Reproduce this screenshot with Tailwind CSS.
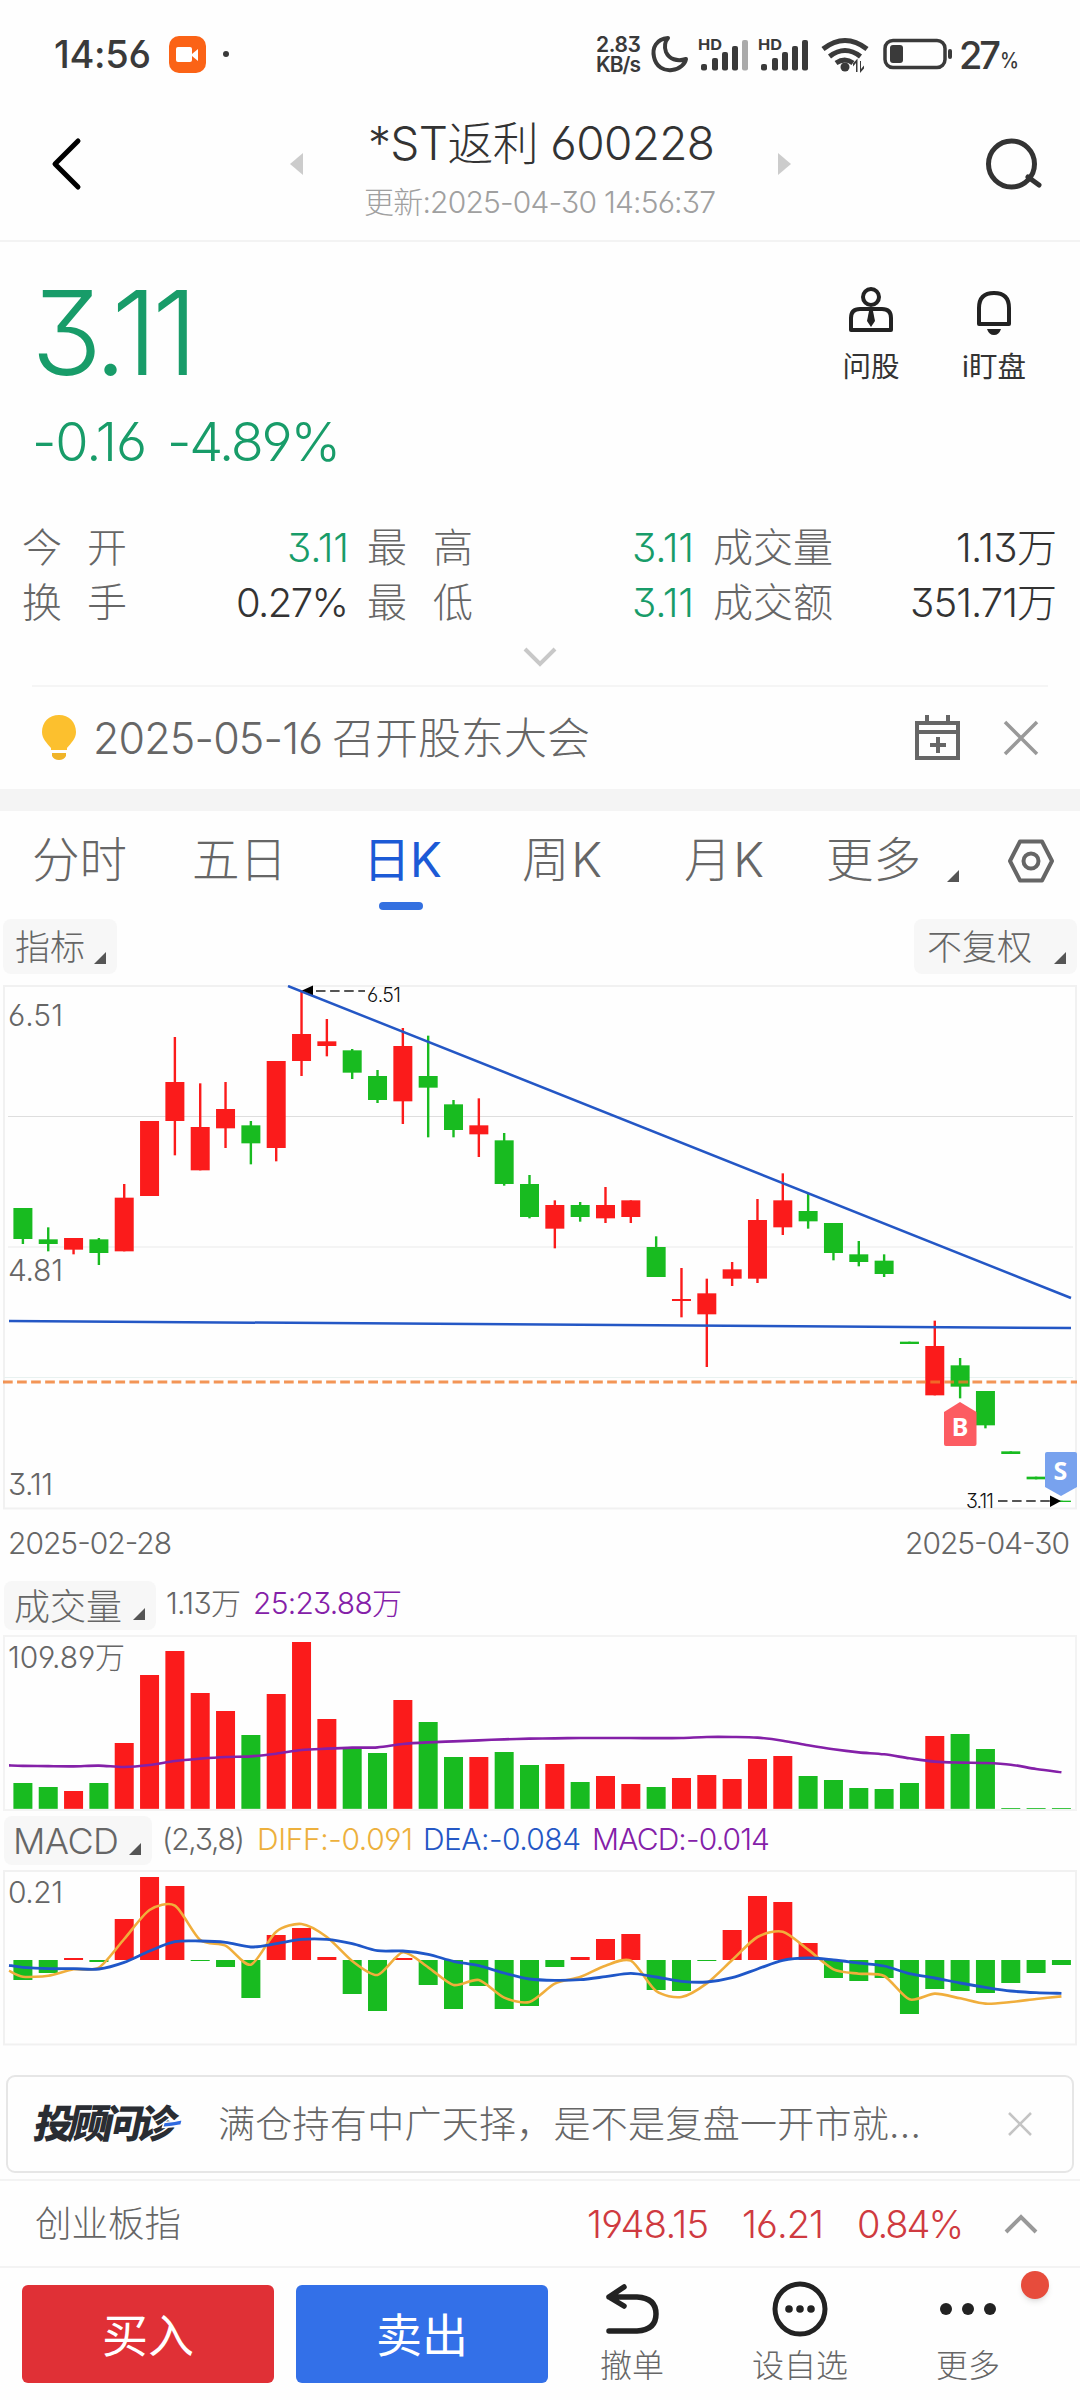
<!DOCTYPE html>
<html lang="zh-CN">
<head>
<meta charset="utf-8">
<title>*ST返利 600228</title>
<script src="https://cdn.jsdelivr.net/npm/@tailwindcss/browser@4"></script>
</head>
<body class="w-[1080px] h-[2400px] overflow-hidden bg-[#fefefe] font-[Inter,'Noto_Sans_CJK_SC',sans-serif] [font-feature-settings:'cv03','cv04','cv09'] font-light text-[#666] whitespace-nowrap">

<!-- status bar -->
<div class="h-[108px] flex items-center text-[#3a3a3a]">
  <span class="ml-[54px] w-[115px] text-[38px] font-medium" data-fit="97">14:56</span>
  <svg class="w-[37px] h-[37px]" viewBox="0 0 37 37"><rect width="37" height="37" rx="10" fill="#fb6316"/><rect x="7" y="11" width="16" height="15" rx="2" fill="#fff"/><path d="M23 18l6-5v12l-6-5z" fill="#fff"/></svg>
  <span class="ml-[17px] w-[6px] h-[6px] rounded-full bg-[#3a3a3a]"></span>
  <div class="ml-[367px] w-[53px] text-[21px] leading-[20px] font-semibold pt-[1px]"><div data-fit="45">2.83</div><div data-fit="45">KB/s</div></div>
  <svg class="w-[371px] h-[40px]" viewBox="649 34 371 40">
    <path d="M668 38C656 39 652 48 654 57C656 67 664 71 672 70C680 69 685 64 686 59C677 62 669 59 666 52C664 47 665 41 668 38Z" fill="none" stroke="#3a3a3a" stroke-width="4" stroke-linejoin="round"/>
    <g fill="#3a3a3a">
      <rect x="701" y="64" width="6" height="6.500" rx="2"/><rect x="712" y="58" width="6" height="12.500" rx="2"/><rect x="722" y="52" width="6" height="18.500" rx="2"/><rect x="732" y="46" width="6" height="24.500" rx="2"/><rect x="742" y="40" width="6" height="30.500" rx="2" fill="#aaa"/>
      <rect x="761" y="64" width="6" height="6.500" rx="2"/><rect x="772" y="58" width="6" height="12.500" rx="2"/><rect x="782" y="52" width="6" height="18.500" rx="2"/><rect x="792" y="46" width="6" height="24.500" rx="2"/><rect x="802" y="40" width="6" height="30.500" rx="2"/>
      <text x="698" y="50" font-size="15" font-weight="700" textLength="24" lengthAdjust="spacingAndGlyphs">HD</text>
      <text x="758" y="50" font-size="15" font-weight="700" textLength="24" lengthAdjust="spacingAndGlyphs">HD</text>
      <circle cx="845" cy="67" r="4.500"/>
      <rect x="890" y="45" width="13" height="18" rx="3"/><rect x="948" y="49" width="4" height="10" rx="2"/>
      <path d="M856 72V63l-3 3.500v-3l4.500-5V72zM861 61v8l3-3.500v3L860 73V61z"/>
    </g>
    <g fill="none" stroke="#3a3a3a" stroke-width="5"><path d="M823 49q22-17 44 0M829.500 56.500q15.500-12 31 0M836 63q9-6 17 0"/></g>
    <rect x="885" y="40.500" width="60" height="27" rx="8" fill="none" stroke="#3a3a3a" stroke-width="3.500"/>
    <text x="959" y="68.500" font-size="38" font-weight="500" fill="#3a3a3a" textLength="42">27</text>
    <text x="1000" y="68" font-size="21" font-weight="500" fill="#3a3a3a" textLength="19" lengthAdjust="spacingAndGlyphs">%</text>
  </svg>
</div>

<!-- title bar -->
<div class="h-[134px] flex items-start border-b-2 border-[#f3f3f3]">
  <svg class="ml-[49px] mt-[28px] w-[36px] h-[56px]" viewBox="0 0 36 56"><path d="M29 5L6 28L29 51" fill="none" stroke="#000" stroke-width="5" stroke-linecap="round" stroke-linejoin="round"/></svg>
  <svg class="ml-[205px] mt-[45px] w-[13px] h-[22px]" viewBox="0 0 13 22"><path d="M13 0v22L0 11z" fill="#ccc"/></svg>
  <div class="ml-[65px] w-[410px] flex flex-col">
    <span class="h-[60px] leading-[60px] mt-[5px] text-[46px] text-[#333]" data-fit="347">*ST返利 600228</span>
    <span class="h-[40px] leading-[40px] mt-[9px] -ml-[4px] text-[30px] text-[#a0a0a0]" data-fit="352">更新:2025-04-30 14:56:37</span>
  </div>
  <svg class="mt-[45px] w-[13px] h-[22px]" viewBox="0 0 13 22"><path d="M0 0v22L13 11z" fill="#ccc"/></svg>
  <svg class="ml-[193px] mt-[28px] w-[60px] h-[56px]" viewBox="984 136 60 56"><circle cx="1011.500" cy="164" r="23" fill="none" stroke="#333" stroke-width="5"/><path d="M1028 177l11 8" stroke="#333" stroke-width="5" stroke-linecap="round"/></svg>
</div>

<!-- price -->
<div class="h-[270px] flex items-start">
  <div class="w-[841px] text-[#189c69]">
    <div class="ml-[31px] mt-[31px] h-[120px] leading-[120px] text-[117px]" data-fit="167">3.11</div>
    <div class="h-[60px] mt-[19px] leading-[60px] text-[54px] flex">
      <span class="ml-[32px] w-[135px]" data-fit="115">-0.16</span><span data-fit="174">-4.89%</span>
    </div>
  </div>
  <div class="w-[60px] mt-[43px] flex flex-col items-center text-[28.500px] text-[#333] font-normal">
    <svg class="w-[50px] h-[50px]" viewBox="846 285 50 50" fill="none" stroke="#222" stroke-width="4"><circle cx="871" cy="297" r="8"/><path d="M851 330V318q0-9 9-9h22q9 0 9 9v12z" stroke-linejoin="round"/><path d="M869 311h4l2 10l-4 6l-4-6z" fill="#222" stroke="none"/></svg>
    <span class="h-[44px] leading-[44px] mt-[10px]">问股</span>
  </div>
  <div class="ml-[58px] w-[70px] mt-[43px] flex flex-col items-center text-[28.500px] text-[#333] font-normal">
    <svg class="w-[50px] h-[50px]" viewBox="970 285 50 50" fill="none" stroke="#222" stroke-width="4"><path d="M980 324V308q0-15 15-15t15 15V324z" stroke-linejoin="round"/><path d="M988 329h14q-2 6-7 6t-7-6z" fill="#222" stroke="none"/></svg>
    <span class="h-[44px] leading-[44px] mt-[10px]">i盯盘</span>
  </div>
</div>

<!-- quote figures -->
<div class="h-[173px] pt-[9px]">
  <div class="grid grid-cols-[65px_65px_197px_66px_66px_213px_123px_240px] ml-[22px] text-[40px] leading-[54px] h-[54px]">
    <span>今</span><span>开</span><span class="text-right text-[#189c69]"><b class="font-[270]" data-fit="62">3.11</b></span>
    <span class="pl-[18px]">最</span><span class="pl-[18px]">高</span><span class="text-right text-[#189c69]"><b class="font-[270]" data-fit="62">3.11</b></span>
    <span class="pl-[19px]">成交量</span><span class="text-right text-[#333]"><b class="font-[270]" data-fit="101">1.13万</b></span>
  </div>
  <div class="grid grid-cols-[65px_65px_197px_66px_66px_213px_123px_240px] ml-[22px] text-[40px] leading-[56px] h-[56px]">
    <span>换</span><span>手</span><span class="text-right text-[#333]"><b class="font-[270]" data-fit="113">0.27%</b></span>
    <span class="pl-[18px]">最</span><span class="pl-[18px]">低</span><span class="text-right text-[#189c69]"><b class="font-[270]" data-fit="62">3.11</b></span>
    <span class="pl-[19px]">成交额</span><span class="text-right text-[#333]"><b class="font-[270]" data-fit="147">351.71万</b></span>
  </div>
  <svg class="mx-auto mt-[15px] w-[36px] h-[22px]" viewBox="0 0 36 22"><path d="M3 3L18 18L33 3" fill="none" stroke="#c8c8c8" stroke-width="4"/></svg>
</div>

<!-- notice -->
<div class="h-[104px] mx-[32px] border-t-2 border-[#f5f5f5] flex items-center">
  <svg class="ml-[10px] w-[34px] h-[46px]" viewBox="0 0 34 46"><path d="M17 0C7 0 0 7 0 17C0 24 5 28 9 33V35H25V33C29 28 34 24 34 17C34 7 27 0 17 0Z" fill="#fcc02e"/><path d="M10 38H24V41Q22 45 17 45T10 41Z" fill="#f0b429"/></svg>
  <span class="ml-[17px] w-[821px] text-[43px]"><b class="font-light" data-fit="230">2025-05-16</b><b class="font-light ml-[9px]">召开股东大会</b></span>
  <svg class="-ml-[2px] w-[50px] h-[48px]" viewBox="911 713 50 48" fill="none" stroke="#666" stroke-width="4"><path d="M916 722h41v35h-41zM916 731h41M926 714v10M947 714v10"/><path d="M929 744h16M937 736v16" stroke-width="4"/></svg>
  <svg class="ml-[39px] w-[40px] h-[40px]" viewBox="0 0 40 40"><path d="M4 4L36 36M36 4L4 36" stroke="#999" stroke-width="3.500"/></svg>
</div>
<div class="h-[22px] bg-[#f4f4f4]"></div>

<!-- period tabs -->
<div class="h-[108px] flex pt-[14px] text-[47.500px] leading-[70px]">
  <span class="ml-[32px] w-[160px]">分时</span><span class="w-[173px]">五日</span>
  <div class="w-[157px] text-[#1c5ad6] font-normal"><div class="-ml-[2px] h-[77px]" data-fit="79">日K</div><div class="ml-[14px] w-[44px] h-[8px] rounded-full bg-[#3370e0]"></div></div>
  <span class="w-[162px]" data-fit="80">周K</span><span class="w-[142px]" data-fit="80">月K</span><span class="w-[121px]">更多</span>
  <svg class="mt-[45px] w-[12px] h-[12px]" viewBox="0 0 12 12"><path d="M12 0V12H0z" fill="#555"/></svg>
  <svg class="ml-[46px] mt-[12px] w-[52px] h-[48px]" viewBox="0 0 52 48" fill="none" stroke="#666" stroke-width="4"><path d="M5 24L15 4.500H37L47 24L37 43.500H15z" stroke-linejoin="round"/><circle cx="26" cy="24" r="7.500"/></svg>
</div>

<div class="h-[66px] flex justify-between items-start px-[3px] text-[35px]">
  <div class="w-[114px] h-[55px] rounded-[8px] bg-[#f7f7f7] flex items-center pt-[1px] pl-[12px]">指标<svg class="ml-[9px] mt-[21px] w-[12px] h-[12px]" viewBox="0 0 12 12"><path d="M12 0V12H0z" fill="#555"/></svg></div>
  <div class="w-[163px] h-[55px] rounded-[8px] bg-[#f7f7f7] flex items-center pt-[1px] pl-[13px]">不复权<svg class="ml-[22px] mt-[21px] w-[12px] h-[12px]" viewBox="0 0 12 12"><path d="M12 0V12H0z" fill="#555"/></svg></div>
</div>

<!-- candles -->
<svg class="block w-[1080px] h-[596px]" viewBox="0 985 1080 596">
  <rect x="4" y="986" width="1072" height="522.500" fill="none" stroke="#f1f1f1" stroke-width="2"/>
  <path d="M8 1116.500H1073" stroke="#dedede" stroke-width="1"/><path d="M8 1247H1073" stroke="#f0f0f0" stroke-width="1.500"/><path d="M4 1377.500H1073" stroke="#e8f1f0" stroke-width="1"/>
  <g id="candles"></g>
  <path d="M288 986L1071 1298M9 1321L1071 1328" stroke="#2457c5" stroke-width="2.500" fill="none"/>
  <path d="M3 1382H1077" stroke="#f07a2c" stroke-opacity=".8" stroke-width="3" stroke-dasharray="9.700 4.350"/>
  <path d="M302 990.500L313 985.500V995z"/><path d="M316 991H365" stroke="#555" stroke-width="1.800" stroke-dasharray="9.500 4.600"/>
  <path d="M1061 1501L1050 1495.500V1507z"/><path d="M998 1501H1050" stroke="#555" stroke-width="1.800" stroke-dasharray="9.500 4.600"/>
  <path d="M960 1402L976.500 1412V1444Q976.500 1446 974.500 1446H946Q944 1446 944 1444V1412z" fill="#fc5c62"/>
  <path d="M1061 1496L1077 1487V1454Q1077 1452 1075 1452H1047Q1045 1452 1045 1454V1487z" fill="#78a2ee"/>
  <g font-family="'Noto Sans',sans-serif" font-weight="700" fill="#fff" font-size="25" text-anchor="middle"><text x="960" y="1436">B</text><text x="1060.500" y="1480">S</text></g>
  <g fill="#111" font-size="19.500" font-weight="300"><text x="367" y="1002" textLength="34">6.51</text><text x="966" y="1508" textLength="28">3.11</text></g>
  <g fill="#666" font-size="30">
    <text x="8" y="1026" textLength="55">6.51</text><text x="8" y="1281" textLength="55">4.81</text><text x="8" y="1494.500" textLength="45">3.11</text>
    <text x="8" y="1554" textLength="164">2025-02-28</text><text x="905" y="1554" textLength="165">2025-04-30</text>
  </g>
</svg>

<!-- volume -->
<div class="h-[54px] flex items-start text-[30px]">
  <div class="ml-[4px] w-[152px] h-[49px] rounded-[8px] bg-[#f7f7f7] flex items-center pt-[2px] pl-[10px] text-[36px]">成交量<svg class="ml-[11px] mt-[14px] w-[12px] h-[12px]" viewBox="0 0 12 12"><path d="M12 0V12H0z" fill="#555"/></svg></div>
  <span class="ml-[10px] w-[87px] leading-[45px]" data-fit="75">1.13万</span>
  <span class="leading-[45px] text-[#8420a8]" data-fit="149">25:23.88万</span>
</div>
<svg class="block w-[1080px] h-[181px]" viewBox="0 1635 1080 181">
  <rect x="4" y="1636" width="1072" height="174" fill="none" stroke="#f3f3f3" stroke-width="2"/>
  <g id="volume"></g><path id="volma" fill="none" stroke="#8420a8" stroke-width="2.600"/>
  <text x="8" y="1668" font-size="30" fill="#666" textLength="117">109.89万</text>
</svg>

<!-- MACD -->
<div class="h-[54px] flex items-start text-[30px]">
  <div class="ml-[4px] w-[148px] h-[49px] rounded-[8px] bg-[#f7f7f7] flex items-center pl-[9px] text-[36px]"><span class="w-[116px] pt-[1px]" data-fit="106">MACD</span><svg class="mt-[16px] w-[12px] h-[12px]" viewBox="0 0 12 12"><path d="M12 0V12H0z" fill="#555"/></svg></div>
  <span class="ml-[10px] w-[95px] leading-[46px]" data-fit="83">(2,3,8)</span>
  <span class="w-[166px] leading-[46px] text-[#edb03c]" data-fit="156">DIFF:-0.091</span>
  <span class="w-[169px] leading-[46px] text-[#2457c5]" data-fit="158">DEA:-0.084</span>
  <span class="leading-[46px] text-[#8420a8]" data-fit="178">MACD:-0.014</span>
</div>
<svg class="block w-[1080px] h-[176px]" viewBox="0 1870 1080 176">
  <rect x="4" y="1871" width="1072" height="173.500" fill="none" stroke="#f1f1f1" stroke-width="2"/>
  <g id="macd"></g>
  <path id="diff" fill="none" stroke="#f0ae3c" stroke-width="2.600"/><path id="dea" fill="none" stroke="#1f57c8" stroke-width="2.800"/>
  <text x="8" y="1903" font-size="30" fill="#666" textLength="55">0.21</text>
</svg>

<!-- adviser card -->
<div class="mt-[29px] mx-[6px] h-[98px] border-2 border-[#e6e6e6] rounded-[9px] flex items-center text-[37px]">
  <span class="relative ml-[27px] w-[183px] h-[50px] leading-[50px] text-[39px] font-black text-[#2a2d33]"><span class="inline-block -skew-x-12" data-fit="152">投顾问诊</span>
    <svg class="absolute left-[125px] top-[19px] w-[26px] h-[12px]" viewBox="0 0 26 12"><path d="M4 4.500Q13 4 22.500 1.500L21 7Q12 9 2.500 9.500z" fill="#2f6ae0" stroke="#fefefe" stroke-width="1.500"/></svg></span>
  <span class="w-[791px] pt-[2px]" data-fit="703">满仓持有中广天择，是不是复盘一开市就...</span>
  <svg class="w-[26px] h-[26px] -ml-[2px]" viewBox="0 0 26 26"><path d="M2 2L24 24M24 2L2 24" stroke="#c4c4c4" stroke-width="2.500"/></svg>
</div>

<!-- index ticker -->
<div class="mt-[6px] h-[87px] border-t-2 border-[#f3f3f3] flex items-center pt-[2px] text-[38px] text-[#cf3a40]">
  <span class="ml-[35px] w-[552px] text-[36.500px] text-[#666]">创业板指</span>
  <span class="w-[155px]" data-fit="122">1948.15</span><span class="w-[115px]" data-fit="82">16.21</span><span class="w-[146px]" data-fit="107">0.84%</span>
  <svg class="w-[36px] h-[22px] mb-[2px]" viewBox="0 0 36 22"><path d="M3 19L18 4L33 19" fill="none" stroke="#999" stroke-width="4"/></svg>
</div>

<!-- actions -->
<div class="h-[134px] border-t-2 border-[#f3f3f3] flex items-start font-normal">
  <div class="ml-[22px] mt-[17px] w-[252px] h-[98px] rounded-[6px] bg-[#e03036] text-white text-[46px] flex items-center justify-center pt-[2px]">买入</div>
  <div class="ml-[22px] mt-[17px] w-[252px] h-[98px] rounded-[6px] bg-[#3370e8] text-white text-[46px] flex items-center justify-center pt-[2px]">卖出</div>
  <div class="ml-[53px] mt-[12px] w-[62px] flex flex-col items-center text-[32px] font-light">
    <svg class="w-[62px] h-[60px]" viewBox="602 2280 62 60" fill="none" stroke="#222" stroke-width="5.500" stroke-linecap="round" stroke-linejoin="round"><path d="M625 2287L610 2297L625 2306M610 2297H638Q657 2298 657 2314T638 2331H610"/></svg>
    <span class="h-[44px] leading-[44px] mt-[4px]">撤单</span>
  </div>
  <div class="ml-[88px] mt-[12px] w-[98px] flex flex-col items-center text-[32px] font-light">
    <svg class="w-[62px] h-[60px]" viewBox="0 0 62 60"><circle cx="31" cy="29" r="25" fill="none" stroke="#222" stroke-width="5"/><g fill="#222"><circle cx="20" cy="29" r="3.800"/><circle cx="31" cy="29" r="3.800"/><circle cx="42" cy="29" r="3.800"/></g></svg>
    <span class="h-[44px] leading-[44px] mt-[4px]">设自选</span>
  </div>
  <div class="relative ml-[87px] mt-[12px] w-[64px] flex flex-col items-center text-[32px] font-light">
    <svg class="w-[62px] h-[60px]" viewBox="0 0 62 60" fill="#222"><circle cx="9" cy="29" r="6"/><circle cx="31" cy="29" r="6"/><circle cx="53" cy="29" r="6"/></svg>
    <span class="h-[44px] leading-[44px] mt-[4px]">更多</span>
    <span class="absolute left-[85px] -top-[9px] w-[28px] h-[28px] rounded-full bg-[#e74c3c] shadow-md"></span>
  </div>
</div>

<script>
const RED = '#fb1b1b', GREEN = '#18bb20', X0 = 22.9, STEP = 25.33;
const cx = i => X0 + i * STEP;
const byId = id => document.getElementById(id);
const rect = (x, y, w, h, c) => `<rect x="${x}" y="${y}" width="${w}" height="${h}" fill="${c}"/>`;

/* direction, high, body top, body bottom, low (thirds of a pixel below y = 970) */
const candles = [
 'g',714,714,807,822,'g',772,808,822,844,'r',804,804,839,853,'g',804,808,849,885,'r',642,683,844,844,'r',453,453,678,678,
 'r',201,336,453,556,'r',340,471,601,601,'r',336,417,475,534,'g',453,466,520,583,'r',273,273,534,574,'r',62,192,273,318,
 'r',147,214,228,259,'g',237,241,308,327,'g',300,318,390,399,'r',174,228,394,462,'g',197,318,353,502,'g',390,403,480,502,
 'r',385,466,493,561,'g',489,511,642,647,'g',615,642,741,745,'r',691,705,776,835,'g',696,705,741,755,'r',651,705,745,759,
 'r',691,691,741,759,'g',799,831,921,921,'r',894,987,993,1042,'r',926,970,1033,1191,'r',876,898,926,948,'r',687,750,926,939,
 'r',610,691,772,795,'g',670,723,754,776,'g',759,759,849,871,'g',813,853,876,889,'g',853,872,912,921,'g',1115,1115,1122,1122,
 'r',1052,1128,1276,1276,'g',1164,1186,1250,1285,'g',1263,1263,1366,1375,'g',1444,1444,1452,1452,'g',1520,1520,1528,1528,'g',1592,1592,1596,1596];
const dirs = [];
let out = '';
for (let k = 0; k < candles.length; k += 5) {
  const [d, h, t, b, l] = candles.slice(k, k + 5), c = d === 'r' ? RED : GREEN, x = cx(k / 5);
  dirs.push(c);
  out += rect(x - 1.2, 970 + h / 3, 2.4, (l - h) / 3, c) + rect(x - 9.5, 970 + t / 3, 19, (b - t) / 3, c);
}
byId('candles').innerHTML = out;

const vol = [1209,1221,1233,1209,1089,885,813,939,993,1065,942,786,1017,1104,1119,960,1026,1131,1131,1116,1155,1152,1206,1188,1212,1221,1194,1185,1197,1137,1128,1188,1200,1224,1227,1209,1068,1062,1107,1284,1284,1284];
byId('volume').innerHTML = vol.map((v, i) => rect(cx(i) - 9.5, 1380 + v / 3, 19, (1286.5 - v) / 3, dirs[i])).join('');

const macd = [540,519,474,486,357,231,258,483,501,594,405,384,471,582,633,474,555,627,558,627,618,501,471,417,402,570,573,483,390,288,306,429,534,543,534,642,567,573,579,549,519,495];
byId('macd').innerHTML = macd.map((v, i) => rect(cx(i) - 9.5, 1800 + Math.min(v, 480) / 3, 19, Math.abs(v - 480) / 3, v < 480 ? RED : GREEN)).join('');

function curve(id, base, start, vals, k) {
  const p = [[9, base + start / 3], ...vals.map((v, i) => [cx(i), base + v / 3])];
  let d = `M${p[0]}`;
  for (let i = 0; i < p.length - 1; i++) {
    const a = p[i - 1] || p[i], b = p[i], c = p[i + 1], e = p[i + 2] || c;
    d += `C${b[0] + (c[0] - a[0]) * k},${b[1] + (c[1] - a[1]) * k} ${c[0] - (e[0] - b[0]) * k},${c[1] - (e[1] - b[1]) * k} ${c}`;
  }
  byId(id).setAttribute('d', d);
}
curve('volma', 1380, 1156, [1157.5,1158.5,1159,1157,1161,1155,1143,1136,1131,1129,1121,1110,1106,1103,1102,1092,1087,1084,1081,1078,1076,1075,1074,1074,1074,1074.5,1074,1071,1071,1073,1082,1096,1108,1117,1123,1135,1145,1148,1149,1154,1167,1177], .15);
curve('diff', 1800, 512, [530,527,508,503,417,330,317,420,437,494,395,372,411,483,525,457,502,555,540,593,606,551,531,497,482,573,591,550,480,411,395,449,508,521,528,598,581,595,611,606,597,589], .13);
curve('dea', 1800, 496, [502,506,506,507,487,453,425,423,427,441,431,418,418,431,452,453,463,484,497,519,537,541,539,530,520,531,544,546,533,507,481,474,480,489,498,521,534,549,562,573,578,580], .15);

/* track each figure out to its column width, once the styles are in */
function fit() {
  document.querySelectorAll('[data-fit]').forEach(el => {
    el.style.letterSpacing = '0px';
    el.style.marginRight = '';
    const r = document.createRange();
    r.selectNodeContents(el);
    const n = el.textContent.length, s = (el.dataset.fit - r.getBoundingClientRect().width) / (n - 1);
    el.style.letterSpacing = s + 'px';
    if (getComputedStyle(el).display === 'inline') el.style.marginRight = -s + 'px';
  });
}
const ready = () => {
  if (getComputedStyle(document.body).overflow !== 'hidden') return setTimeout(ready, 10);
  fit();
  document.fonts.ready.then(fit);
};
ready();
addEventListener('load', fit);
</script>
</body>
</html>
